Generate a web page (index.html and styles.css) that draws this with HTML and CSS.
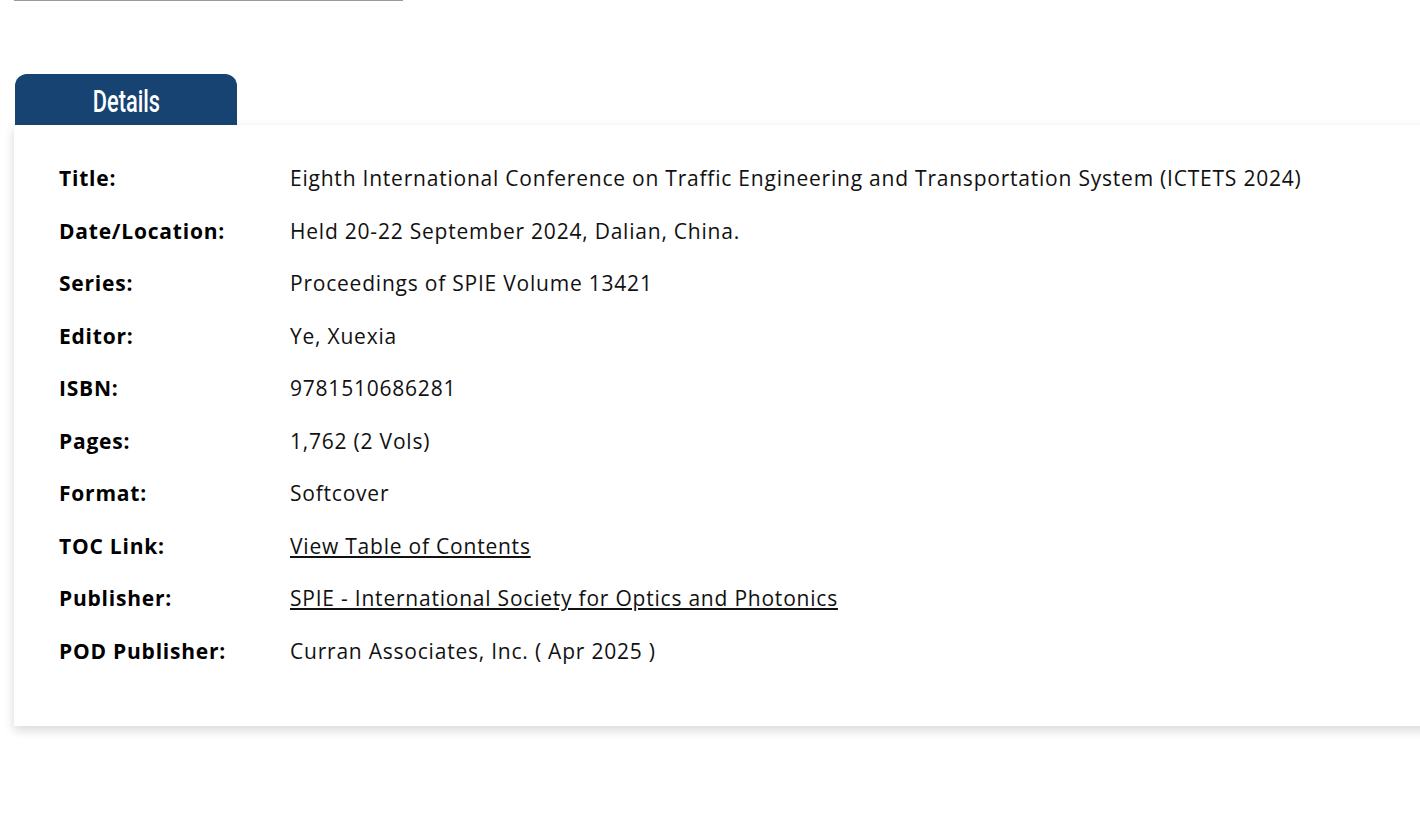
FILE: index.html
```html
<!DOCTYPE html>
<html>
<head>
<meta charset="utf-8">
<link rel="stylesheet" href="styles.css">
</head>
<body>
<div class="page">
  <div class="topline"></div>
  <div class="tabs">
    <div class="tab"><span class="tab-text">Details</span></div>
  </div>
  <div class="card">
    <div class="row"><div class="label">Title:</div><div class="value">Eighth International Conference on Traffic Engineering and Transportation System (ICTETS 2024)</div></div>
    <div class="row"><div class="label">Date/Location:</div><div class="value">Held 20-22 September 2024, Dalian, China.</div></div>
    <div class="row"><div class="label">Series:</div><div class="value">Proceedings of SPIE Volume 13421</div></div>
    <div class="row"><div class="label">Editor:</div><div class="value">Ye, Xuexia</div></div>
    <div class="row"><div class="label">ISBN:</div><div class="value">9781510686281</div></div>
    <div class="row"><div class="label">Pages:</div><div class="value">1,762 (2 Vols)</div></div>
    <div class="row"><div class="label">Format:</div><div class="value">Softcover</div></div>
    <div class="row"><div class="label">TOC Link:</div><div class="value"><a href="#" class="link">View Table of Contents</a></div></div>
    <div class="row"><div class="label">Publisher:</div><div class="value"><a href="#" class="link">SPIE - International Society for Optics and Photonics</a></div></div>
    <div class="row"><div class="label">POD Publisher:</div><div class="value">Curran Associates, Inc. ( Apr 2025 )</div></div>
  </div>
</div>
</body>
</html>
```
FILE: styles.css
```css
html {
  overflow-x: hidden;
}
body {
  margin: 0;
  padding: 0;
  background: #fff;
  font-family: "Open Sans", sans-serif;
  color: #111;
}
.page {
  padding-left: 14px;
  padding-bottom: 40px;
  width: 1460px;
}
.topline {
  width: 389px;
  height: 1px;
  background: #9a9a9a;
  margin-bottom: 73px;
}
.tabs {
  display: flex;
  padding-left: 1px;
}
.tab {
  width: 222px;
  height: 51px;
  background: #164372;
  color: #fff;
  border-radius: 12px 12px 0 0;
  display: flex;
  justify-content: center;
  align-items: center;
}
.tab-text {
  display: inline-block;
  font-family: Roboto, sans-serif;
  font-weight: 500;
  font-size: 32px;
  line-height: 1;
  transform: scaleX(0.68);
  margin-top: 3px;
}
.card {
  background: #fff;
  box-shadow: 0 4px 10px rgba(0,0,0,0.16);
  padding: 27px 0 49px 45px;
}
.row {
  display: flex;
  height: 52.5px;
  align-items: center;
  font-size: 21px;
  letter-spacing: 0.78px;
}
.label {
  width: 231px;
  font-weight: 700;
  color: #000;
}
.value {
  color: #111;
}
.link {
  color: #111;
  text-decoration: underline;
}
```
